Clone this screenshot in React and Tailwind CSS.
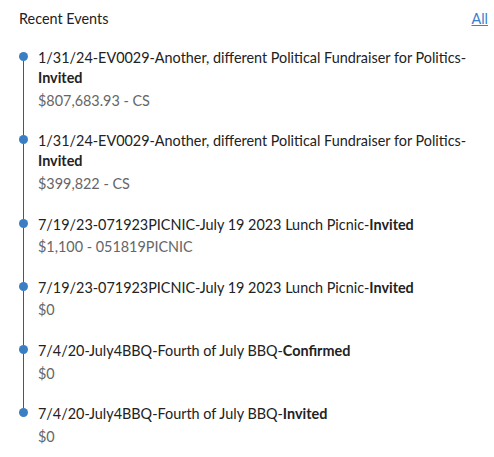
import React from "react";

const events = [
  {
    title: "1/31/24-EV0029-Another, different Political Fundraiser for Politics-",
    status: "Invited",
    amount: "$807,683.93 - CS",
  },
  {
    title: "1/31/24-EV0029-Another, different Political Fundraiser for Politics-",
    status: "Invited",
    amount: "$399,822 - CS",
  },
  {
    title: "7/19/23-071923PICNIC-July 19 2023 Lunch Picnic-",
    status: "Invited",
    amount: "$1,100 - 051819PICNIC",
  },
  {
    title: "7/19/23-071923PICNIC-July 19 2023 Lunch Picnic-",
    status: "Invited",
    amount: "$0",
  },
  {
    title: "7/4/20-July4BBQ-Fourth of July BBQ-",
    status: "Confirmed",
    amount: "$0",
  },
  {
    title: "7/4/20-July4BBQ-Fourth of July BBQ-",
    status: "Invited",
    amount: "$0",
  },
];

const App = () => {
  return (
    <div
      className="w-[494px] min-h-[457px] bg-white pl-[19px] pr-[6px] text-[14.4px] text-[#222]"
      style={{ fontFamily: "Lato, 'Noto Sans', sans-serif" }}
    >
      {/* header */}
      <div className="flex items-center justify-between pt-[9px] leading-[20px]">
        <h2 className="font-normal">Recent Events</h2>
        <a href="#" className="text-[#3a7fd0] underline">
          All
        </a>
      </div>

      {/* timeline */}
      <ul className="mt-[19px]">
        {events.map((ev, i) => {
          const first = i === 0;
          const last = i === events.length - 1;
          return (
            <li key={i} className="flex">
              <div className="flex w-[9px] shrink-0 flex-col items-center">
                <div className={`h-[4px] w-[1.5px] ${first ? "" : "bg-[#555]"}`} />
                <div className="h-[9px] w-[9px] rounded-full bg-[#3a7fc4]" />
                {!last && <div className="w-[1.5px] flex-1 bg-[#555]" />}
              </div>
              <div className={`ml-[10px] ${last ? "" : "pb-[20.8px]"}`}>
                <p className="leading-[20px]">
                  {ev.title}
                  <b className="font-bold">{ev.status}</b>
                </p>
                <p className="mt-[2.5px] leading-[20px] text-[#666]">{ev.amount}</p>
              </div>
            </li>
          );
        })}
      </ul>
    </div>
  );
};

export default App;
